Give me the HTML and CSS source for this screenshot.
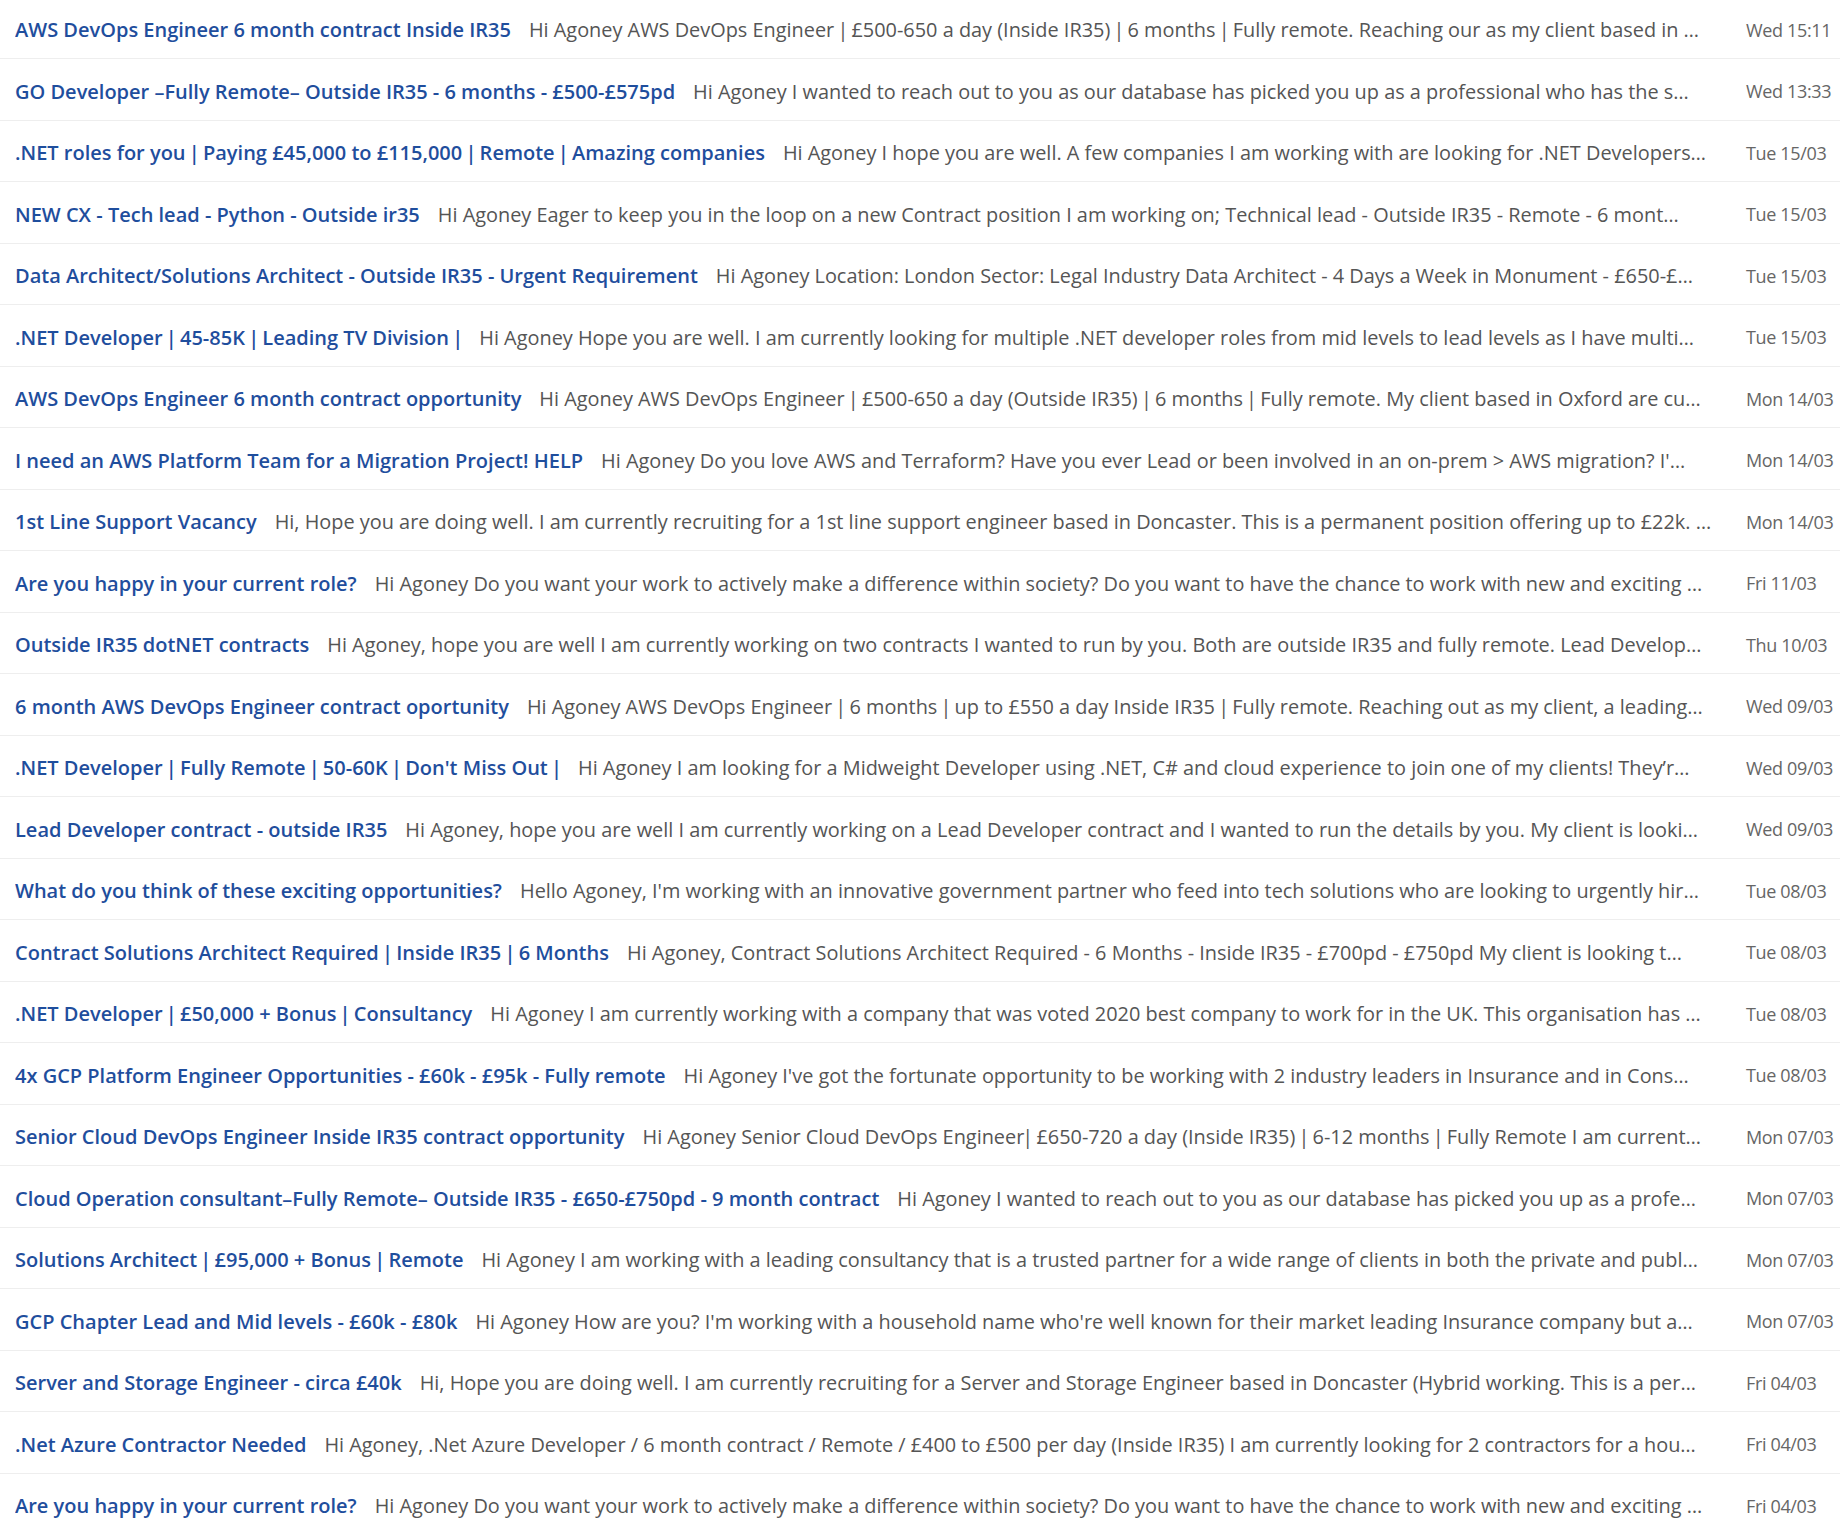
FILE: index.html
```html
<!DOCTYPE html>
<html lang="en">
<head>
<meta charset="utf-8">
<title>Inbox</title>
<link rel="stylesheet" href="styles.css">
</head>
<body>
<ul class="list">
<li class="row"><div class="main"><span class="subject">AWS DevOps Engineer 6 month contract Inside IR35</span><span class="preview">Hi Agoney AWS DevOps Engineer <span class="sep">|</span> £500-650 a day (Inside IR35) <span class="sep">|</span> 6 months <span class="sep">|</span> Fully remote. Reaching our as my client based in …</span></div><div class="date">Wed 15:11</div></li>
<li class="row"><div class="main"><span class="subject">GO Developer –Fully Remote– Outside IR35 - 6 months - £500-£575pd</span><span class="preview">Hi Agoney I wanted to reach out to you as our database has picked you up as a professional who has the s…</span></div><div class="date">Wed 13:33</div></li>
<li class="row"><div class="main"><span class="subject">.NET roles for you <span class="sep">|</span> Paying £45,000 to £115,000 <span class="sep">|</span> Remote <span class="sep">|</span> Amazing companies</span><span class="preview">Hi Agoney I hope you are well. A few companies I am working with are looking for .NET Developers…</span></div><div class="date">Tue 15/03</div></li>
<li class="row"><div class="main"><span class="subject">NEW CX - Tech lead - Python - Outside ir35</span><span class="preview">Hi Agoney Eager to keep you in the loop on a new Contract position I am working on; Technical lead - Outside IR35 - Remote - 6 mont…</span></div><div class="date">Tue 15/03</div></li>
<li class="row"><div class="main"><span class="subject">Data Architect/Solutions Architect - Outside IR35 - Urgent Requirement</span><span class="preview">Hi Agoney Location: London Sector: Legal Industry Data Architect - 4 Days a Week in Monument - £650-£…</span></div><div class="date">Tue 15/03</div></li>
<li class="row"><div class="main"><span class="subject">.NET Developer <span class="sep">|</span> 45-85K <span class="sep">|</span> Leading TV Division <span class="sep">|</span></span><span class="preview">Hi Agoney Hope you are well. I am currently looking for multiple .NET developer roles from mid levels to lead levels as I have multi…</span></div><div class="date">Tue 15/03</div></li>
<li class="row"><div class="main"><span class="subject">AWS DevOps Engineer 6 month contract opportunity</span><span class="preview">Hi Agoney AWS DevOps Engineer <span class="sep">|</span> £500-650 a day (Outside IR35) <span class="sep">|</span> 6 months <span class="sep">|</span> Fully remote. My client based in Oxford are cu…</span></div><div class="date">Mon 14/03</div></li>
<li class="row"><div class="main"><span class="subject">I need an AWS Platform Team for a Migration Project! HELP</span><span class="preview">Hi Agoney Do you love AWS and Terraform? Have you ever Lead or been involved in an on-prem &gt; AWS migration? I'…</span></div><div class="date">Mon 14/03</div></li>
<li class="row"><div class="main"><span class="subject">1st Line Support Vacancy</span><span class="preview">Hi, Hope you are doing well. I am currently recruiting for a 1st line support engineer based in Doncaster. This is a permanent position offering up to £22k. …</span></div><div class="date">Mon 14/03</div></li>
<li class="row"><div class="main"><span class="subject">Are you happy in your current role?</span><span class="preview">Hi Agoney Do you want your work to actively make a difference within society? Do you want to have the chance to work with new and exciting …</span></div><div class="date">Fri 11/03</div></li>
<li class="row"><div class="main"><span class="subject">Outside IR35 dotNET contracts</span><span class="preview">Hi Agoney, hope you are well I am currently working on two contracts I wanted to run by you. Both are outside IR35 and fully remote. Lead Develop…</span></div><div class="date">Thu 10/03</div></li>
<li class="row"><div class="main"><span class="subject">6 month AWS DevOps Engineer contract oportunity</span><span class="preview">Hi Agoney AWS DevOps Engineer <span class="sep">|</span> 6 months <span class="sep">|</span> up to £550 a day Inside IR35 <span class="sep">|</span> Fully remote. Reaching out as my client, a leading…</span></div><div class="date">Wed 09/03</div></li>
<li class="row"><div class="main"><span class="subject">.NET Developer <span class="sep">|</span> Fully Remote <span class="sep">|</span> 50-60K <span class="sep">|</span> Don't Miss Out <span class="sep">|</span></span><span class="preview">Hi Agoney I am looking for a Midweight Developer using .NET, C# and cloud experience to join one of my clients! They’r…</span></div><div class="date">Wed 09/03</div></li>
<li class="row"><div class="main"><span class="subject">Lead Developer contract - outside IR35</span><span class="preview">Hi Agoney, hope you are well I am currently working on a Lead Developer contract and I wanted to run the details by you. My client is looki…</span></div><div class="date">Wed 09/03</div></li>
<li class="row"><div class="main"><span class="subject">What do you think of these exciting opportunities?</span><span class="preview">Hello Agoney, I'm working with an innovative government partner who feed into tech solutions who are looking to urgently hir…</span></div><div class="date">Tue 08/03</div></li>
<li class="row"><div class="main"><span class="subject">Contract Solutions Architect Required <span class="sep">|</span> Inside IR35 <span class="sep">|</span> 6 Months</span><span class="preview">Hi Agoney, Contract Solutions Architect Required - 6 Months - Inside IR35 - £700pd - £750pd My client is looking t…</span></div><div class="date">Tue 08/03</div></li>
<li class="row"><div class="main"><span class="subject">.NET Developer <span class="sep">|</span> £50,000 + Bonus <span class="sep">|</span> Consultancy</span><span class="preview">Hi Agoney I am currently working with a company that was voted 2020 best company to work for in the UK. This organisation has …</span></div><div class="date">Tue 08/03</div></li>
<li class="row"><div class="main"><span class="subject">4x GCP Platform Engineer Opportunities - £60k - £95k - Fully remote</span><span class="preview">Hi Agoney I've got the fortunate opportunity to be working with 2 industry leaders in Insurance and in Cons…</span></div><div class="date">Tue 08/03</div></li>
<li class="row"><div class="main"><span class="subject">Senior Cloud DevOps Engineer Inside IR35 contract opportunity</span><span class="preview">Hi Agoney Senior Cloud DevOps Engineer<span class="sep">|</span> £650-720 a day (Inside IR35) <span class="sep">|</span> 6-12 months <span class="sep">|</span> Fully Remote I am current…</span></div><div class="date">Mon 07/03</div></li>
<li class="row"><div class="main"><span class="subject">Cloud Operation consultant–Fully Remote– Outside IR35 - £650-£750pd - 9 month contract</span><span class="preview">Hi Agoney I wanted to reach out to you as our database has picked you up as a profe…</span></div><div class="date">Mon 07/03</div></li>
<li class="row"><div class="main"><span class="subject">Solutions Architect <span class="sep">|</span> £95,000 + Bonus <span class="sep">|</span> Remote</span><span class="preview">Hi Agoney I am working with a leading consultancy that is a trusted partner for a wide range of clients in both the private and publ…</span></div><div class="date">Mon 07/03</div></li>
<li class="row"><div class="main"><span class="subject">GCP Chapter Lead and Mid levels - £60k - £80k</span><span class="preview">Hi Agoney How are you? I'm working with a household name who're well known for their market leading Insurance company but a…</span></div><div class="date">Mon 07/03</div></li>
<li class="row"><div class="main"><span class="subject">Server and Storage Engineer - circa £40k</span><span class="preview">Hi, Hope you are doing well. I am currently recruiting for a Server and Storage Engineer based in Doncaster (Hybrid working. This is a per…</span></div><div class="date">Fri 04/03</div></li>
<li class="row"><div class="main"><span class="subject">.Net Azure Contractor Needed</span><span class="preview">Hi Agoney, .Net Azure Developer / 6 month contract / Remote / £400 to £500 per day (Inside IR35) I am currently looking for 2 contractors for a hou…</span></div><div class="date">Fri 04/03</div></li>
<li class="row"><div class="main"><span class="subject">Are you happy in your current role?</span><span class="preview">Hi Agoney Do you want your work to actively make a difference within society? Do you want to have the chance to work with new and exciting …</span></div><div class="date">Fri 04/03</div></li>
</ul>
</body>
</html>
```

FILE: styles.css
```css
html, body {
  margin: 0;
  padding: 0;
  background: #ffffff;
}

body {
  font-family: "Open Sans", "Noto Sans", "Liberation Sans", sans-serif;
  font-size: 20px;
  overflow: hidden;
}

.list {
  list-style: none;
  margin: -2.5px 0 0 0;
  padding: 0;
}

.row {
  display: flex;
  align-items: center;
  box-sizing: border-box;
  height: 61.5px;
  padding-left: 15px;
  padding-top: 4px;
  border-bottom: 1.5px solid #eeeeee;
}

.main {
  flex: 1 1 auto;
  min-width: 0;
  margin-right: 18px;
  white-space: nowrap;
  overflow: hidden;
  text-overflow: ellipsis;
}

.subject {
  color: #1f4e9d;
  font-weight: 600;
  font-size: 20px;
  margin-right: 18px;
}

.preview {
  color: #555555;
  font-size: 19.9px;
}

.sep {
  margin: 0 -2px;
}

.date {
  flex: 0 0 94px;
  color: #666666;
  font-size: 18px;
  letter-spacing: -0.35px;
  white-space: nowrap;
}
```
